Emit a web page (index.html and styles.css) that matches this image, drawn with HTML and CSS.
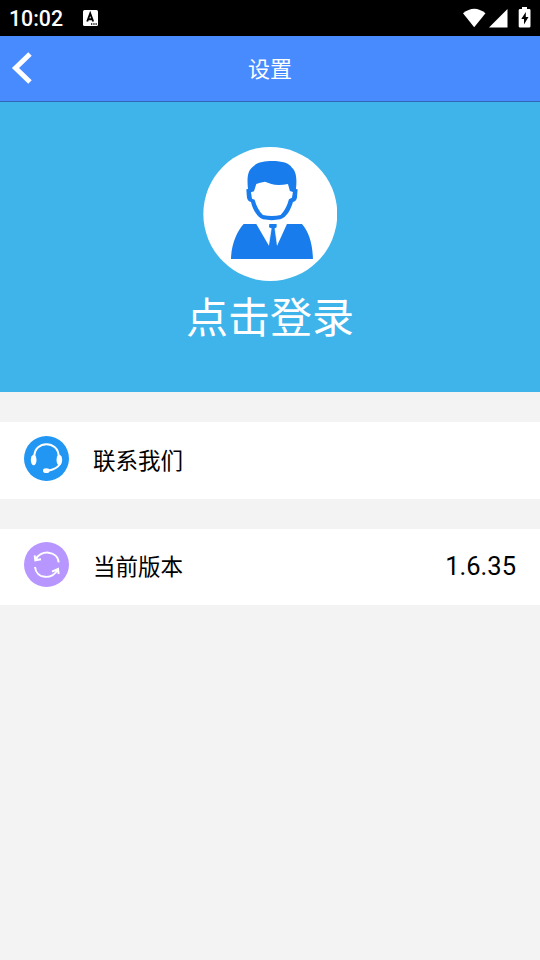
FILE: index.html
```html
<!DOCTYPE html>
<html lang="zh-CN">
<head>
<meta charset="utf-8">
<title>设置</title>
<link rel="stylesheet" href="styles.css">
</head>
<body>
<div class="status">
  <span class="clock">10:02</span>
  <svg class="keyboard" width="15" height="16" viewBox="0 0 15 16"><rect width="15" height="16" rx="1.5" fill="#fff"/><path d="M4.2 11.500 7.200 3.500 10.200 11.500M5.300 9.200h3.800" fill="none" stroke="#000" stroke-width="1.900"/><path d="M8 14h1.300M10.300 14h1.300M12.500 14h1.300" stroke="#000" stroke-width="1.300"/></svg>
  <svg class="signals" width="68" height="22" viewBox="0 0 68 22" fill="#fff"><path d="M0 6.200Q11.200-2.800 22.500 6.200L11.200 20.200z"/><path d="M26 20.500 44.500 2v18.500z"/><path d="M59 0h5v2h2.200q1.300 0 1.300 1.300v15.900q0 1.300-1.300 1.300h-9.200q-1.300 0-1.300-1.300V3.300q0-1.300 1.300-1.300h2z"/><path d="M62.800 5 58.300 12h2.700v5.500l4.500-7.500h-2.700z" fill="#000"/></svg>
</div>
<header class="header">
  <svg class="back" width="21" height="34" viewBox="0 0 21 34"><path d="M19 3 4.500 17 19 31" fill="none" stroke="#fff" stroke-width="5"/></svg>
  <h1 class="title">设置</h1>
</header>
<section class="hero">
  <svg class="avatar" width="134.600" height="134" viewBox="24 21 404 402">
    <circle cx="226" cy="222" r="201" fill="#fff"/>
    <g fill="#197ced">
      <path fill-rule="evenodd" d="M159 147C156 117 157 94 172 82C186 66 207 63 232 63C262 63 283 69 291 83C305 94 306 120 303 147L308 148L306 173Q303 184 294 186C287 210 275 232 256 238Q231 243 204 238C187 232 174 211 168 186Q159 184 156 173L154 148zM177 154L168 157L171 176L179 179C184 198 192 213 204 225Q231 231 257 225C270 213 277 196 282 178L291 173L294 156L285 153L279 132Q249 138 229 132Q218 128 210 125Q194 127 184 132z"/>
      <path d="M146 252H184L221 316L229 265L222 262L223 252H245V262L240 265L247 316L276 252H321C341 275 353 309 354 357H108C109 312 126 274 146 252z"/>
    </g>
    <path d="M229 265 221 316M240 265 247 316" stroke="#fff" stroke-width="2"/>
  </svg>
  <div class="login">点击登录</div>
</section>
<main class="list">
  <div class="row contact">
    <svg class="icon" width="45" height="45" viewBox="0 0 135 135"><circle cx="67.500" cy="67.500" r="67.500" fill="#2196f3"/><path d="M31 62C31 12 104 12 104 62M108 84Q98 100 71 104" fill="none" stroke="#fff" stroke-width="6"/><ellipse cx="29" cy="72" rx="8.500" ry="15.500" fill="#fff"/><ellipse cx="106" cy="72" rx="8.500" ry="15.500" fill="#fff"/><ellipse cx="67" cy="104" rx="10" ry="7" fill="#fff"/></svg>
    <span class="label">联系我们</span>
  </div>
  <div class="row version">
    <svg class="icon" width="45" height="45" viewBox="0 0 135 135"><circle cx="67.500" cy="67.500" r="67.500" fill="#b896ff"/><path d="M34 54C48 22 101 25 104 61M33 75C37 113 87 113 101 83M32 40 34 55 51 52M84 89 102 81 104 96" fill="none" stroke="#fff" stroke-width="6"/></svg>
    <span class="label">当前版本</span>
    <span class="value">1.6.35</span>
  </div>
</main>
</body>
</html>
```
FILE: styles.css
```css
* { box-sizing: border-box; }
body {
  margin: 0;
  min-height: 960px;
  background: #f3f3f3;
  color: #000;
  font-family: Roboto, "Noto Sans CJK SC", sans-serif;
}
svg { display: block; flex: none; }
.status {
  display: flex;
  height: 36px;
  padding: 0 9px;
  background: #000;
  color: #fff;
}
.clock {
  width: 74px;
  font-size: 21.300px;
  font-weight: 500;
  line-height: 38px;
}
.keyboard { margin-top: 10px; }
.signals { margin: 7px 0 0 auto; }
.header {
  display: grid;
  grid-template-columns: 1fr auto 1fr;
  align-items: center;
  height: 66px;
  padding: 0 11px;
  border-bottom: 1px solid #2f68b8;
  background: #488bff;
  color: #fff;
}
.back { margin-bottom: 2px; }
.title {
  margin: 2px 0 0;
  font-size: 22px;
  font-weight: 400;
  line-height: 32px;
}
.hero {
  display: flex;
  flex-direction: column;
  align-items: center;
  height: 290px;
  padding-top: 45px;
  background: #3eb4eb;
  color: #fff;
}
.login {
  margin-top: 8px;
  font-size: 42px;
  line-height: 60px;
}
.list {
  display: flex;
  flex-direction: column;
  gap: 30px;
  padding-top: 30px;
}
.row {
  display: flex;
  align-items: center;
  padding: 0 24px;
  background: #fff;
}
.contact { height: 77px; padding-bottom: 4px; }
.version { height: 76px; padding-bottom: 5px; }
.label {
  margin: 4px 0 0 24px;
  font-size: 22.500px;
  line-height: 32px;
}
.value {
  margin: 2px 0 0 auto;
  font-size: 25.500px;
  line-height: 32px;
}
```
